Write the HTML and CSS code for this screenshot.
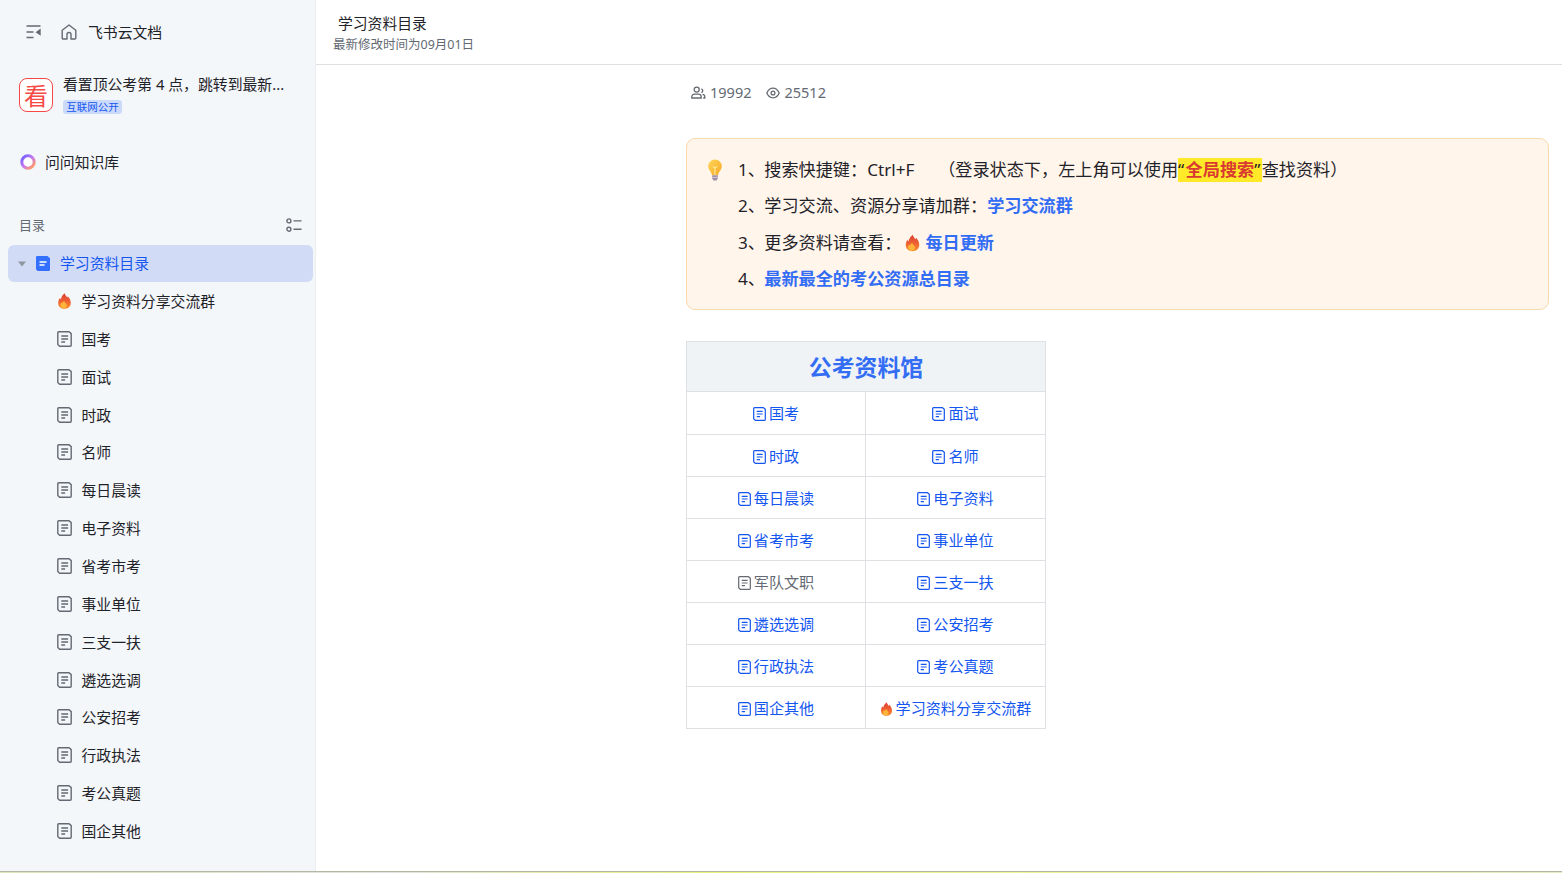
FILE: index.html
```html
<!DOCTYPE html>
<html lang="zh-CN">
<head>
    <meta charset="utf-8">
    <title>学习资料目录</title>
    <link rel="stylesheet" href="styles.css">
</head>
<body>

    <!-- icons -->
    <svg class="defs" width="0" height="0">
        <defs>
            <linearGradient id="fireGrad" x1="0" y1="0" x2="0" y2="1">
                <stop offset="0" stop-color="#dc3f32"/>
                <stop offset=".5" stop-color="#ee5f33"/>
                <stop offset="1" stop-color="#f8912c"/>
            </linearGradient>
            <linearGradient id="bulbGrad" x1="0" y1="0" x2="1" y2="1">
                <stop offset="0" stop-color="#ffd65a"/>
                <stop offset="1" stop-color="#f9a825"/>
            </linearGradient>
            <linearGradient id="ringGrad" x1="0" y1="0" x2="1" y2="1">
                <stop offset="0.1" stop-color="#7a62ff"/>
                <stop offset=".5" stop-color="#c77bf0"/>
                <stop offset=".9" stop-color="#ff9a6a"/>
            </linearGradient>
            <symbol id="doc" viewBox="0 0 15 16" preserveAspectRatio="none">
                <path d="M1.700.8h10.400l2.100 1.800v11.700a.9.9 0 0 1-.9.9H2.600L.8 13.600V1.700a.9.9 0 0 1 .9-.9z" fill="none" stroke="currentColor" stroke-width="1.400" stroke-linejoin="round"/>
                <path d="M4.300 5h6.800M4.300 8h6.800M4.300 11h3.800" fill="none" stroke="currentColor" stroke-width="1.300"/>
            </symbol>
            <symbol id="fire" viewBox="0 0 14 16">
                <path d="M7.200.3c.3 1.800 1.600 2.700 2.500 4.200.4-.4.5-.8.5-1.300 1.900 1.900 3.100 4.100 3.100 6.500 0 3.900-2.700 6-6.300 6S.7 13.500.7 9.900c0-2.300.8-3.700 1.700-5 .2.700.5 1.100 1 1.400C3.600 4.200 5.200 1.900 7.200.3z" fill="url(#fireGrad)"/>
                <path d="M6.600 8c.2 1.500 2.700 2.300 2.700 4.300 0 1.700-1.200 2.900-3 2.900s-3.300-1.200-3.300-3c0-1.300.4-2 1-2.700.2.500.4.8.8 1 .1-1.100.8-1.900 1.800-2.500z" fill="#ffb53a"/>
            </symbol>
        </defs>
    </svg>

    <div class="page">
        <aside class="sidebar">
            <div class="top">
                <svg class="fold" width="16" height="14" viewBox="0 0 16 14">
                    <path d="M.5 1h14M.5 7h7M.5 12.500h7" fill="none" stroke="#646a73" stroke-width="1.400"/>
                    <path d="M14.700 3.600v7.200L9.600 7.200z" fill="#646a73"/>
                </svg>
                <svg class="home" width="16" height="16" viewBox="0 0 16 16">
                    <path d="M1.200 6.200L8 1l6.800 5.200V14a1 1 0 0 1-1 1H10V10.500a2 2 0 0 0-4 0V15H2.200a1 1 0 0 1-1-1z" fill="none" stroke="#646a73" stroke-width="1.400" stroke-linejoin="round"/>
                </svg>
                <span>飞书云文档</span>
            </div>

            <div class="wiki">
                <div class="logo">看</div>
                <div class="wiki-info">
                    <div class="wiki-name">看置顶公考第 4 点，跳转到最新...</div>
                    <span class="tag">互联网公开</span>
                </div>
            </div>

            <div class="ask">
                <svg width="16" height="16" viewBox="0 0 16 16">
                    <circle cx="8" cy="8" r="6.200" fill="#fff" stroke="url(#ringGrad)" stroke-width="3"/>
                </svg>
                <span>问问知识库</span>
            </div>

            <div class="toc-head">
                <span>目录</span>
                <svg width="16" height="14" viewBox="0 0 16 14" fill="none" stroke="#646a73" stroke-width="1.400">
                    <circle cx="2.900" cy="2.900" r="2"/>
                    <circle cx="2.900" cy="11.200" r="2"/>
                    <path d="M7.500 2.900h8M7.500 11.200h8"/>
                </svg>
            </div>

            <div class="current">
                <svg class="arrow" width="8" height="6" viewBox="0 0 8 6"><path d="M0 .5h8L4 5.500z" fill="#8f959e"/></svg>
                <svg width="14" height="15" viewBox="0 0 14 15">
                    <path d="M1.200 0h10.300L14 2.300v11.500a1.200 1.200 0 0 1-1.200 1.200H1.800L0 13.500V1.200A1.200 1.200 0 0 1 1.200 0z" fill="#3370ff"/>
                    <path d="M3.500 6h7M3.500 9h5" stroke="#fff" stroke-width="1.300"/>
                </svg>
                <span>学习资料目录</span>
            </div>

            <ul class="tree">
                <li><svg class="ico fire"><use href="#fire"/></svg><span>学习资料分享交流群</span></li>
                <li><svg class="ico"><use href="#doc"/></svg><span>国考</span></li>
                <li><svg class="ico"><use href="#doc"/></svg><span>面试</span></li>
                <li><svg class="ico"><use href="#doc"/></svg><span>时政</span></li>
                <li><svg class="ico"><use href="#doc"/></svg><span>名师</span></li>
                <li><svg class="ico"><use href="#doc"/></svg><span>每日晨读</span></li>
                <li><svg class="ico"><use href="#doc"/></svg><span>电子资料</span></li>
                <li><svg class="ico"><use href="#doc"/></svg><span>省考市考</span></li>
                <li><svg class="ico"><use href="#doc"/></svg><span>事业单位</span></li>
                <li><svg class="ico"><use href="#doc"/></svg><span>三支一扶</span></li>
                <li><svg class="ico"><use href="#doc"/></svg><span>遴选选调</span></li>
                <li><svg class="ico"><use href="#doc"/></svg><span>公安招考</span></li>
                <li><svg class="ico"><use href="#doc"/></svg><span>行政执法</span></li>
                <li><svg class="ico"><use href="#doc"/></svg><span>考公真题</span></li>
                <li><svg class="ico"><use href="#doc"/></svg><span>国企其他</span></li>
            </ul>
        </aside>

        <main>
            <header>
                <h1>学习资料目录</h1>
                <p>最新修改时间为09月01日</p>
            </header>

            <div class="content">
                <div class="stats">
                    <svg width="15" height="13" viewBox="0 0 15 13" fill="none" stroke="#646a73" stroke-width="1.300">
                        <circle cx="5.700" cy="3.600" r="2.500"/>
                        <path d="M.8 12v-1.200a2.700 2.700 0 0 1 2.700-2.700h4a2.700 2.700 0 0 1 2.700 2.700V12zM10.200 3.200a1.600 1.600 0 0 1 0 3.200M11.500 8.300a2.500 2.500 0 0 1 2.300 2.500V12h-1.600"/>
                    </svg>
                    <span class="members">19992</span>
                    <svg width="14" height="12" viewBox="0 0 14 12" fill="none" stroke="#646a73" stroke-width="1.300">
                        <path d="M.8 6C2.200 3 4.500 1.200 7 1.200S11.800 3 13.200 6C11.800 9 9.500 10.800 7 10.800S2.200 9 .8 6z"/>
                        <circle cx="7" cy="6" r="1.900"/>
                    </svg>
                    <span>25512</span>
                </div>

                <div class="callout">
                    <svg class="bulb" width="16" height="22" viewBox="0 0 16 22">
                        <path d="M8 .5a6.800 6.800 0 0 1 6.800 6.800c0 3.800-3.200 5-3.800 9H5c-.6-4-3.800-5.200-3.800-9A6.800 6.800 0 0 1 8 .5z" fill="url(#bulbGrad)"/>
                        <path d="M5.800 7.500L8 9l2.200-1.500M8 9v7" fill="none" stroke="#ffe894" stroke-width="1.200"/>
                        <path d="M5.200 16.300h5.600v3L9.600 21.500H6.400l-1.200-2.200z" fill="#a08fa6"/>
                        <path d="M5.200 18.400h5.600" stroke="#d4c8d8"/>
                    </svg>
                    <div class="lines">
                        <p><span class="num">1、</span>搜索快捷键：<span class="key">Ctrl+F</span>（登录状态下，左上角可以使用<mark><i>“</i><b>全局搜索</b><i>”</i></mark>查找资料）</p>
                        <p><span class="num">2、</span>学习交流、资源分享请加群：<a>学习交流群</a></p>
                        <p><span class="num">3、</span>更多资料请查看：<svg class="ico fire"><use href="#fire"/></svg><a>每日更新</a></p>
                        <p><span class="num">4、</span><a>最新最全的考公资源总目录</a></p>
                    </div>
                </div>

                <table>
                    <colgroup><col class="left"><col></colgroup>
                    <tr><th colspan="2">公考资料馆</th></tr>
                    <tr class="first">
                        <td><svg class="ico"><use href="#doc"/></svg>国考</td>
                        <td><svg class="ico"><use href="#doc"/></svg>面试</td>
                    </tr>
                    <tr>
                        <td><svg class="ico"><use href="#doc"/></svg>时政</td>
                        <td><svg class="ico"><use href="#doc"/></svg>名师</td>
                    </tr>
                    <tr>
                        <td><svg class="ico"><use href="#doc"/></svg>每日晨读</td>
                        <td><svg class="ico"><use href="#doc"/></svg>电子资料</td>
                    </tr>
                    <tr>
                        <td><svg class="ico"><use href="#doc"/></svg>省考市考</td>
                        <td><svg class="ico"><use href="#doc"/></svg>事业单位</td>
                    </tr>
                    <tr>
                        <td class="off"><svg class="ico"><use href="#doc"/></svg>军队文职</td>
                        <td><svg class="ico"><use href="#doc"/></svg>三支一扶</td>
                    </tr>
                    <tr>
                        <td><svg class="ico"><use href="#doc"/></svg>遴选选调</td>
                        <td><svg class="ico"><use href="#doc"/></svg>公安招考</td>
                    </tr>
                    <tr>
                        <td><svg class="ico"><use href="#doc"/></svg>行政执法</td>
                        <td><svg class="ico"><use href="#doc"/></svg>考公真题</td>
                    </tr>
                    <tr>
                        <td><svg class="ico"><use href="#doc"/></svg>国企其他</td>
                        <td><svg class="ico fire"><use href="#fire"/></svg>学习资料分享交流群</td>
                    </tr>
                </table>
            </div>
        </main>
    </div>
    <div class="edge"></div>

</body>
</html>
```
FILE: styles.css
```css
* {
    box-sizing: border-box;
    margin: 0;
    padding: 0;
}
body {
    font-family: "Noto Sans", "Noto Sans CJK SC", sans-serif;
    font-size: 14.85px;
    color: #1f2329;
    background: #fff;
    text-spacing-trim: space-all;
    overflow: hidden;
}
svg {
    flex: none;
}
.defs {
    display: block;
}
.page {
    display: flex;
    height: 871px;
}
.edge {
    height: 2px;
    border-top: 1px solid #b3b7a4;
    background: linear-gradient(to right, #dfe3ba, #e4e3e0 25%, #eaf27c 45%, #eef593 65%, #e6e9c4);
}

/* sidebar */
.sidebar {
    width: 316px;
    flex: none;
    background: #f3f7fa;
    border-right: 1px solid #eceef1;
}
.top {
    display: flex;
    align-items: center;
    height: 64px;
    padding-left: 26px;
}
.top .home {
    margin: 0 11px 0 19px;
}
.top span, .ask span, .toc-head span {
    padding-bottom: 2px;
}
.wiki {
    display: flex;
    height: 62px;
    padding: 9px 0 0 19px;
}
.logo {
    width: 34px;
    height: 34px;
    margin-top: 5px;
    border: 1px solid #f54a45;
    border-radius: 8px;
    background: #fff;
    color: #f54a45;
    font-size: 24px;
    line-height: 33px;
    text-align: center;
}
.wiki-info {
    margin-left: 10px;
}
.wiki-name {
    line-height: 22px;
    white-space: nowrap;
}
.tag {
    display: block;
    width: 59px;
    height: 14px;
    margin-top: 5px;
    border-radius: 3px;
    background: #cbdafb;
    color: #1456f0;
    font-size: 10.5px;
    line-height: 14px;
    text-align: center;
}
.ask {
    display: flex;
    align-items: center;
    height: 36px;
    margin-top: 18px;
    padding-left: 20px;
}
.ask span {
    margin-left: 9px;
}
.toc-head {
    display: flex;
    align-items: center;
    justify-content: space-between;
    height: 39px;
    margin-top: 26px;
    padding: 0 13px 0 19px;
    color: #646a73;
    font-size: 13px;
}
.toc-head svg {
    margin-bottom: 1px;
}
.current {
    display: flex;
    align-items: center;
    width: 305px;
    height: 37px;
    margin-left: 8px;
    padding-left: 10px;
    border-radius: 6px;
    background: #d1dbf6;
    color: #1456f0;
}
.current .arrow {
    margin-right: 10px;
}
.current span {
    margin-left: 10px;
    padding-bottom: 2px;
}
.tree {
    list-style: none;
}
.tree li {
    display: flex;
    align-items: center;
    height: 37.86px;
    padding-left: 57px;
}
.tree .ico {
    width: 15px;
    height: 16px;
    margin-right: 9.5px;
    color: #646a73;
}
.tree span {
    padding-bottom: 1px;
}

/* right part */
main {
    flex: 1;
}
header {
    height: 65px;
    padding: 12px 0 0 17px;
    border-bottom: 1px solid #dee0e3;
}
header h1 {
    padding-left: 5px;
    font-size: 14.8px;
    font-weight: normal;
    line-height: 22px;
}
header p {
    color: #646a73;
    font-size: 12.5px;
    line-height: 22px;
}
.content {
    width: 863px;
    margin-left: 370px;
}
.stats {
    display: flex;
    align-items: center;
    height: 55px;
    padding-left: 5px;
    color: #646a73;
    font-size: 14.5px;
}
.stats span {
    margin-left: 4px;
    padding-bottom: 2px;
}
.stats .members {
    margin-right: 15px;
}
.callout {
    display: flex;
    height: 172px;
    margin-top: 18px;
    padding: 13px 0 0 20px;
    border: 1px solid #fad9ae;
    border-radius: 9px;
    background: #fff5eb;
}
.bulb {
    margin-top: 7px;
}
.lines {
    margin-left: 15px;
    font-size: 17.15px;
    white-space: nowrap;
}
.lines p {
    height: 36.4px;
    line-height: 36.4px;
}
.num {
    display: inline-block;
    width: 26.3px;
}
.key {
    display: inline-block;
    width: 71px;
}
.lines mark {
    display: inline-block;
    height: 24px;
    line-height: 24px;
    background: #ffe928;
    color: #d83931;
}
.lines i {
    display: inline-block;
    width: 7.5px;
    color: #1f2329;
    font-style: normal;
}
.lines a {
    color: #336df4;
    font-weight: bold;
}
.lines .ico {
    width: 15px;
    height: 18px;
    margin: 0 5px 0 4px;
    vertical-align: -3px;
}

table {
    width: 360px;
    margin-top: 31px;
    border-collapse: collapse;
    table-layout: fixed;
}
.left {
    width: 179px;
}
th, td {
    border: 1px solid #dee0e3;
    text-align: center;
}
th {
    height: 50px;
    padding-top: 2px;
    background: #f0f3f6;
    color: #336df4;
    font-size: 22.9px;
    line-height: 34px;
}
td {
    height: 42px;
    color: #1456f0;
    font-size: 15.1px;
    line-height: 22px;
    white-space: nowrap;
}
.first td {
    height: 43px;
}
td .ico {
    width: 13px;
    height: 14px;
    margin-right: 3px;
    vertical-align: -2px;
}
.off {
    color: #646a73;
}
```
